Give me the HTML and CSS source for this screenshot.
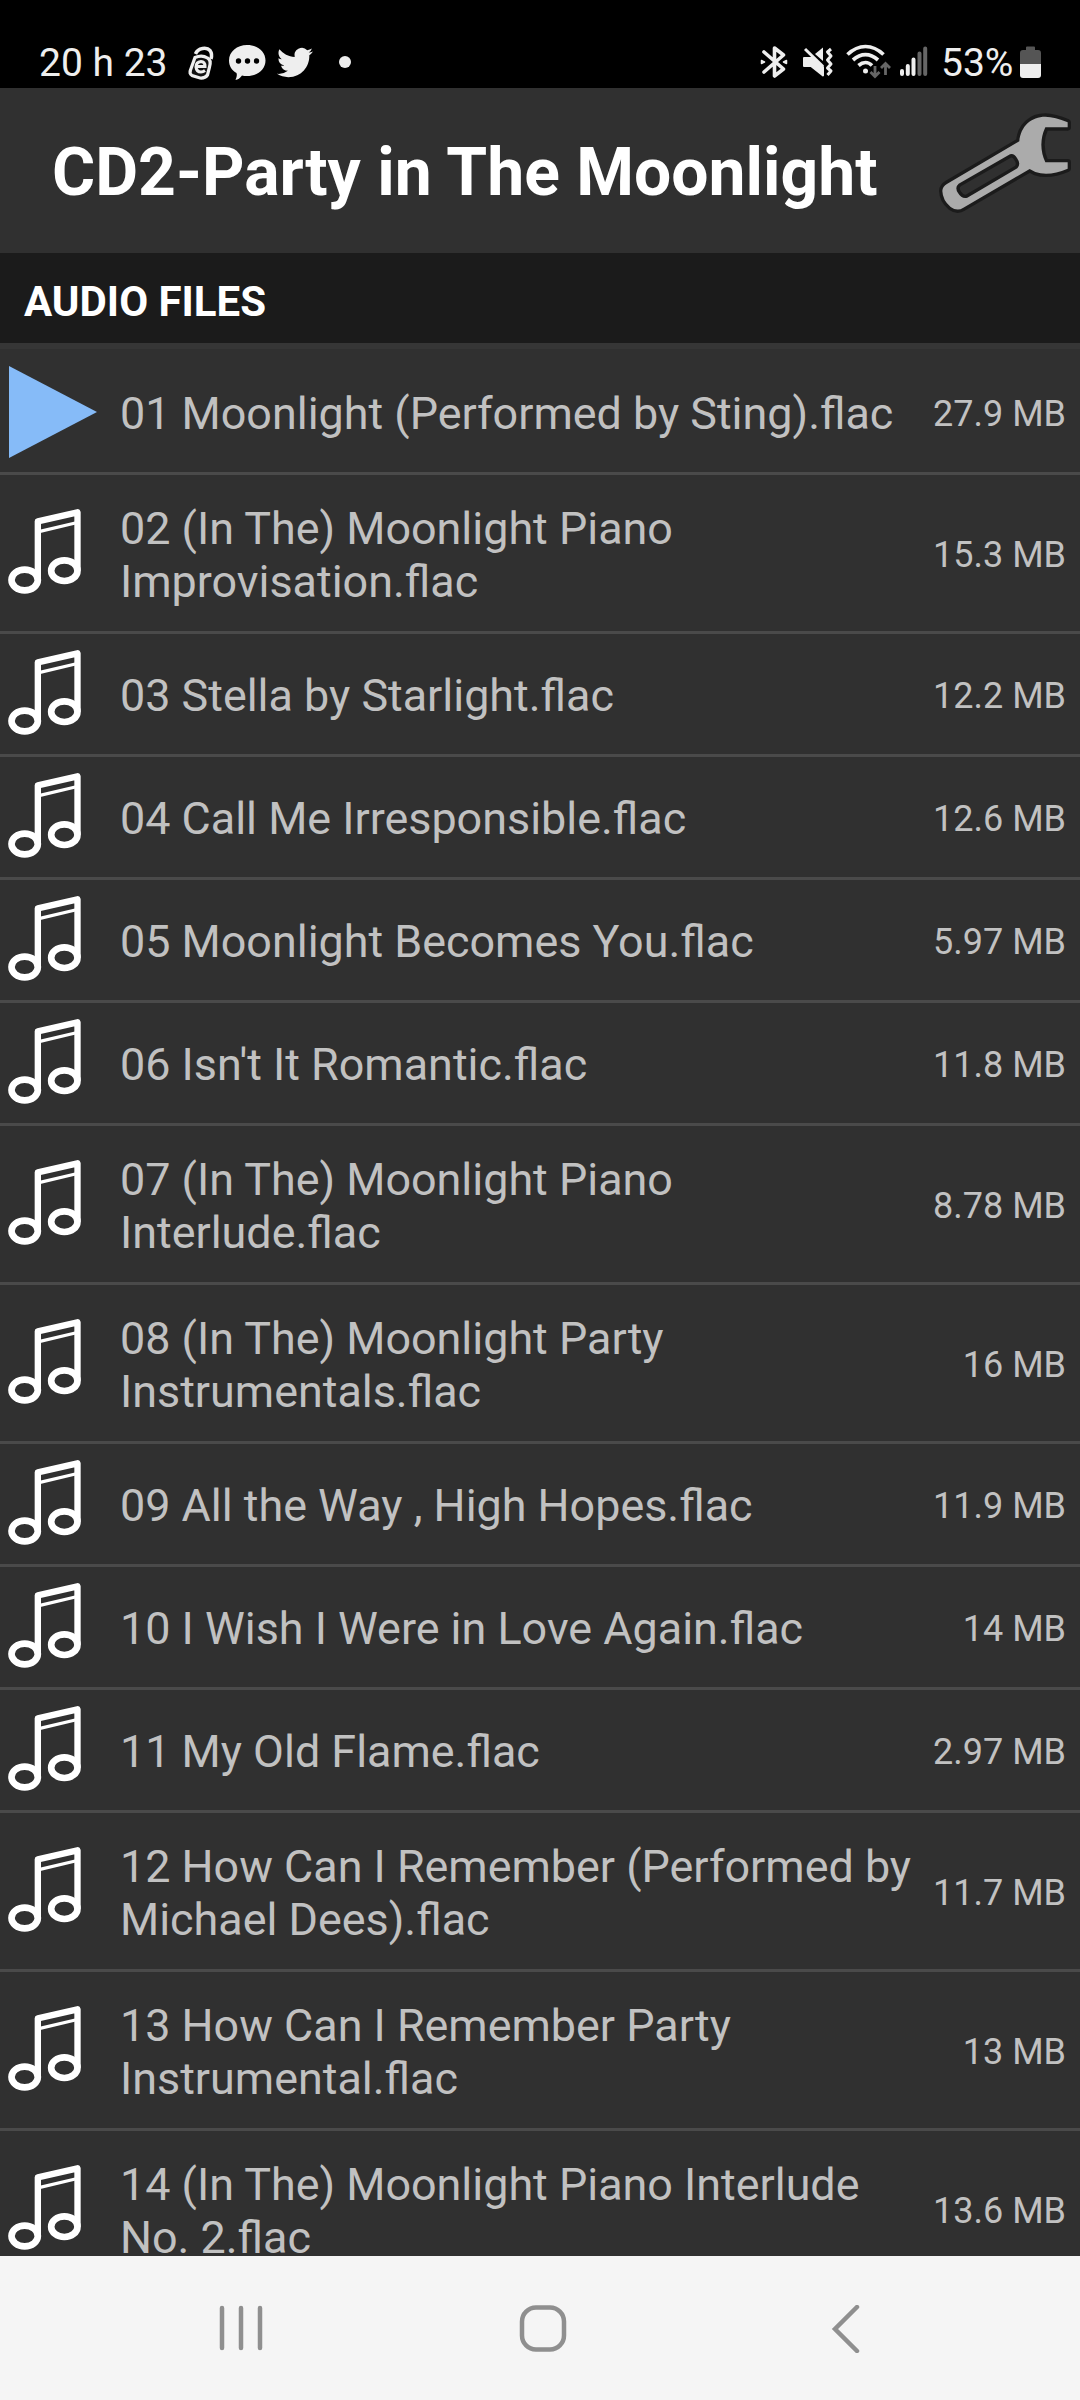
FILE: index.html
```html
<!DOCTYPE html>
<html lang="en">
<head>
<meta charset="utf-8">
<title>CD2-Party in The Moonlight</title>
<link rel="stylesheet" href="styles.css">
</head>
<body>
<svg class="defs" width="0" height="0" aria-hidden="true">
  <symbol id="note" viewBox="18 111 234 276">
    <path d="M113.500 330V154L232.500 127V302" fill="none" stroke="#fff" stroke-width="19" stroke-linejoin="round"/>
    <path d="M120 184L226 159" stroke="#fff" stroke-width="10"/>
    <ellipse cx="74" cy="330" rx="39.500" ry="31" fill="none" stroke="#fff" stroke-width="20"/>
    <ellipse cx="193" cy="302" rx="39.500" ry="31" fill="none" stroke="#fff" stroke-width="20"/>
  </symbol>
</svg>
<div class="status">
  <span class="clock">20 h 23</span>
  <svg class="app-e" width="28" height="40" viewBox="187 42 28 40"><path d="M195.500 54C198 47.500 207 47 210 50.500Q212.500 54 211 59" fill="none" stroke="#eee" stroke-width="3.500"/><path d="M195 57.500Q202 54.500 207.500 58Q211.500 60 209.500 67L207.500 75Q205 78.500 200 78L192 75.500Q189 73.500 190.500 70Z" fill="#111" stroke="#eee" stroke-width="3.200"/><path d="M196.500 66.500H205Q205 61.500 201 61.500Q196 62 196 67Q196.500 72 201 72Q203 72 205 70.500" fill="none" stroke="#eee" stroke-width="3"/></svg>
  <svg class="bubble" width="38" height="40" viewBox="228 42 38 40"><path d="M247 45C257.500 45 265.500 51.500 265.500 60.500S257.500 76 247 76Q244 76 242 75.500Q239 79.500 235.500 80Q237.500 76 236.500 73C232 70.500 229 66 229 60.500C229 51.500 237 45 247 45Z" fill="#eee"/><g fill="#000"><circle cx="238.500" cy="61" r="2.700"/><circle cx="247.500" cy="61" r="2.700"/><circle cx="256.500" cy="61" r="2.700"/></g></svg>
  <svg class="bird" width="36" height="40" viewBox="0 -1.700 24 26.670"><path fill="#eee" d="M23.953 4.570a10 10 0 01-2.825.775 4.958 4.958 0 002.163-2.723c-.951.555-2.005.959-3.127 1.184a4.920 4.920 0 00-8.384 4.482C7.690 8.095 4.067 6.130 1.640 3.162a4.822 4.822 0 00-.666 2.475c0 1.710.870 3.213 2.188 4.096a4.904 4.904 0 01-2.228-.616v.060a4.923 4.923 0 003.946 4.827 4.996 4.996 0 01-2.212.085 4.936 4.936 0 004.604 3.417 9.867 9.867 0 01-6.102 2.105c-.390 0-.779-.023-1.170-.067a13.995 13.995 0 007.557 2.209c9.053 0 13.998-7.496 13.998-13.985 0-.210 0-.420-.015-.630A9.935 9.935 0 0024 4.590z"/></svg>
  <span class="more"></span>
  <div class="system">
    <svg width="28" height="40" viewBox="760 42 28 40" fill="none" stroke="#eee" stroke-width="3.600" stroke-linejoin="round" stroke-linecap="round"><path d="M764 52L783.500 69L774.500 76V48L783.500 55L764 72"/><path d="M761.500 60.500L764.500 62L761.500 63.500ZM786.500 60.500L783.500 62L786.500 63.500Z" stroke-width="1.500" fill="#eee"/></svg>
    <svg class="mute" width="32" height="40" viewBox="802 42 32 40"><path d="M815 54L823 47.500V61Z" fill="#eee"/><path d="M805 49L823 66.500" stroke="#eee" stroke-width="3"/><path d="M804 66H811L823 75.500V67L812 58H804Z" fill="#eee" stroke="#eee" stroke-width="2" stroke-linejoin="round"/><path d="M831 49L827.500 52L831 56L827.500 60L831 64L827.500 68L831 71L827.500 75" fill="none" stroke="#eee" stroke-width="3" stroke-linejoin="round"/></svg>
    <svg class="wifi" width="46" height="40" viewBox="846 42 46 40" fill="none"><g stroke="#eee" stroke-width="3.700"><path d="M847.500 54.500Q856 46.500 865.500 46.500T883.500 54.500"/><path d="M853 60Q859 54.700 865.500 54.700T878 60"/><path d="M858.500 65.500Q862 62.500 865.500 62.500T872 65.500"/></g><circle cx="865.500" cy="71" r="2.500" fill="#eee"/><path d="M875 66V76M870.500 72L875 76.500L879.500 72M885.500 75V64M881 68L885.500 63.500L890 68" stroke="#666" stroke-width="2.800"/></svg>
    <svg class="signal" width="28" height="40" viewBox="900 42 28 40" stroke-width="4" stroke-linecap="round"><path d="M902 71V74M907.800 66V74M913.500 59.500V74" stroke="#eee"/><path d="M919.500 53.500V74M925.200 48.500V74" stroke="#666"/></svg>
    <span class="percent">53%</span>
    <svg class="battery" width="22" height="40" viewBox="1020 42 22 40"><path d="M1020 64V53Q1020 50 1023 50H1026V47.500Q1026 46.500 1027 46.500H1034Q1035 46.500 1035 47.500V50H1038Q1041 50 1041 53V64Z" fill="#555"/><path d="M1020 64H1041V75Q1041 78 1038 78H1023Q1020 78 1020 75Z" fill="#eee"/></svg>
  </div>
</div>
<header class="header">
  <h1>CD2-Party in The Moonlight</h1>
  <svg class="wrench" width="160" height="150" viewBox="0 0 480 450"><path d="M443 97V112H376Q352 164 376 217H443V236Q387 260 346 246L329 237L130 353Q112 365 92 351Q68 331 67 303Q67 290 82 281L298 154C302 108 334 80 376 80Q405 81 443 97ZM270 193L116 281Q103 292 114 309Q125 328 142 323L292 235Q304 222 291 204Q282 189 270 193Z" fill="#ababab" fill-rule="evenodd" stroke="#1b1b1b" stroke-width="20" stroke-linejoin="round" paint-order="stroke"/></svg>
</header>
<h2 class="section">AUDIO FILES</h2>
<ul class="files">
  <li><svg class="play" viewBox="0 0 88 92"><path d="M0 0L88 46L0 92Z"/></svg><span class="name">01 Moonlight (Performed by Sting).flac</span><span class="size">27.9 MB</span></li>
  <li class="tall"><svg class="note"><use href="#note"/></svg><span class="name">02 (In The) Moonlight Piano Improvisation.flac</span><span class="size">15.3 MB</span></li>
  <li><svg class="note"><use href="#note"/></svg><span class="name">03 Stella by Starlight.flac</span><span class="size">12.2 MB</span></li>
  <li><svg class="note"><use href="#note"/></svg><span class="name">04 Call Me Irresponsible.flac</span><span class="size">12.6 MB</span></li>
  <li><svg class="note"><use href="#note"/></svg><span class="name">05 Moonlight Becomes You.flac</span><span class="size">5.97 MB</span></li>
  <li><svg class="note"><use href="#note"/></svg><span class="name">06 Isn't It Romantic.flac</span><span class="size">11.8 MB</span></li>
  <li class="tall"><svg class="note"><use href="#note"/></svg><span class="name">07 (In The) Moonlight Piano Interlude.flac</span><span class="size">8.78 MB</span></li>
  <li class="tall"><svg class="note"><use href="#note"/></svg><span class="name">08 (In The) Moonlight Party Instrumentals.flac</span><span class="size">16 MB</span></li>
  <li><svg class="note"><use href="#note"/></svg><span class="name">09 All the Way , High Hopes.flac</span><span class="size">11.9 MB</span></li>
  <li><svg class="note"><use href="#note"/></svg><span class="name">10 I Wish I Were in Love Again.flac</span><span class="size">14 MB</span></li>
  <li><svg class="note"><use href="#note"/></svg><span class="name">11 My Old Flame.flac</span><span class="size">2.97 MB</span></li>
  <li class="tall"><svg class="note"><use href="#note"/></svg><span class="name">12 How Can I Remember (Performed by Michael Dees).flac</span><span class="size">11.7 MB</span></li>
  <li class="tall"><svg class="note"><use href="#note"/></svg><span class="name">13 How Can I Remember Party Instrumental.flac</span><span class="size">13 MB</span></li>
  <li class="tall"><svg class="note"><use href="#note"/></svg><span class="name">14 (In The) Moonlight Piano Interlude No. 2.flac</span><span class="size">13.6 MB</span></li>
</ul>
<nav class="navbar">
  <svg width="48" height="48" viewBox="0 0 48 48"><path d="M5 3V43M24 3V43M43 3V43"/></svg>
  <svg width="48" height="48" viewBox="0 0 48 48"><rect x="3" y="2.500" width="42" height="42" rx="14"/></svg>
  <svg width="48" height="48" viewBox="0 0 48 48"><path d="M36 2L14 24L36 46"/></svg>
</nav>
</body>
</html>
```
FILE: styles.css
```css
* { box-sizing: border-box; margin: 0; padding: 0; }
body {
  width: 1080px;
  height: 2400px;
  overflow: hidden;
  display: flex;
  flex-direction: column;
  background: #303030;
  font-family: Roboto, "Liberation Sans", sans-serif;
}
svg { display: block; flex: none; }
.defs { display: none; }
.status {
  height: 88px;
  flex: none;
  display: flex;
  align-items: flex-start;
  padding: 42px 38px 0 39px;
  background: #000;
  color: #eee;
}
.clock, .percent { font-size: 39px; line-height: 42px; white-space: nowrap; }
.clock { width: 148px; }
.bubble { margin-left: 13px; }
.bird { margin-left: 11px; }
.more { width: 12px; height: 12px; margin: 14px 0 0 26px; border-radius: 50%; background: #eee; }
.system { display: flex; margin-left: auto; }
.mute { margin-left: 14px; }
.wifi { margin-left: 12px; }
.signal { margin-left: 8px; }
.percent { width: 79px; margin-left: 13px; }
.header {
  height: 165px;
  flex: none;
  display: flex;
  justify-content: space-between;
  padding: 2px 0 0 52px;
}
h1 { font-size: 66px; line-height: 166px; color: #fff; white-space: nowrap; }
.section {
  height: 90px;
  flex: none;
  padding: 5px 24px 0;
  font-size: 42px;
  line-height: 88px;
  color: #fff;
  background: #1b1b1b;
}
.files {
  flex: 1;
  min-height: 0;
  overflow: hidden;
  list-style: none;
  border-top: 6px solid #363636;
  padding-top: 3px;
}
.files li {
  height: 123px;
  display: flex;
  align-items: center;
  padding: 0 14px 0 6px;
  border-bottom: 3px solid #4a4a4a;
  color: #c1c1c1;
}
.files .tall { height: 159px; }
.note { width: 78px; height: 92px; margin-right: 36px; }
.play { width: 88px; height: 92px; margin: 0 23px 0 3px; fill: #86bbf8; }
.name { flex: 1; padding-top: 3px; font-size: 44.880px; line-height: 53px; }
.size { margin-left: 10px; padding-top: 3px; font-size: 36px; line-height: 42px; white-space: nowrap; }
.navbar {
  height: 144px;
  flex: none;
  display: flex;
  justify-content: space-between;
  align-items: center;
  padding: 2px 211px 0 217px;
  background: #f5f5f5;
}
.navbar svg { fill: none; stroke: #8f8f8f; stroke-width: 4.500px; stroke-linecap: round; }
```
